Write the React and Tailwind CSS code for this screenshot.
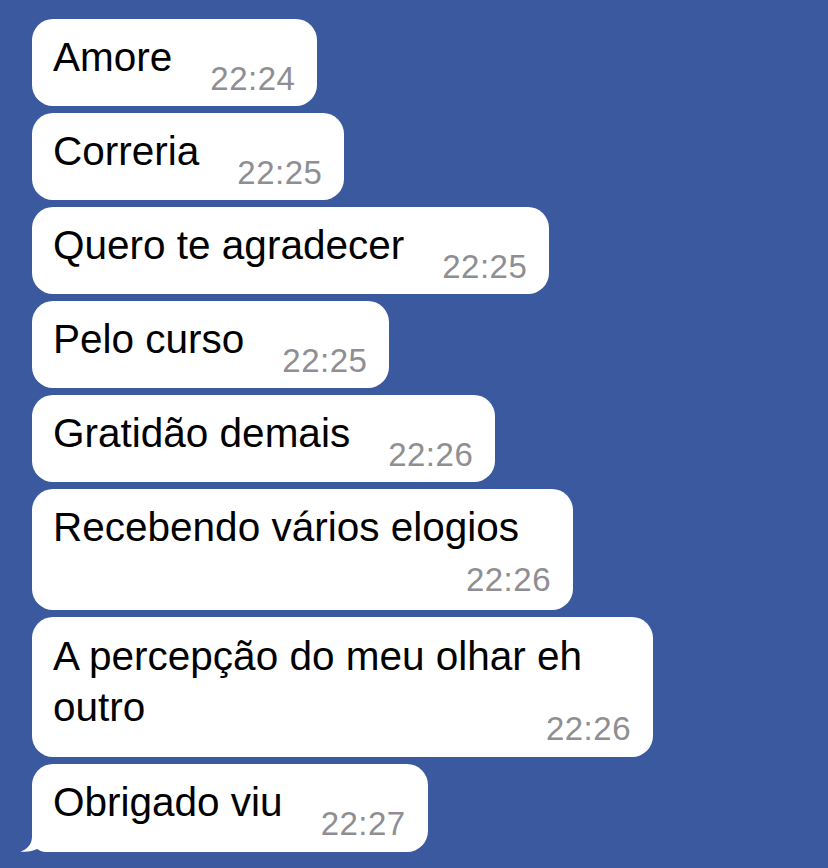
import React from 'react'

const messages = [
  { lines: ['Amore'], time: '22:24' },
  { lines: ['Correria'], time: '22:25' },
  { lines: ['Quero te agradecer'], time: '22:25' },
  { lines: ['Pelo curso'], time: '22:25' },
  { lines: ['Gratidão demais'], time: '22:26' },
  { lines: ['Recebendo vários elogios'], time: '22:26', below: true, width: 'w-[541px]' },
  { lines: ['A percepção do meu olhar eh', 'outro'], time: '22:26', width: 'w-[621px]', pb: 'pb-[24px]' },
  { lines: ['Obrigado viu'], time: '22:27', tail: true, pb: 'pb-[24px]' },
]

const Tail = () => (
  <svg
    className="absolute left-[-12px] bottom-0"
    width="30"
    height="30"
    viewBox="0 0 30 30"
  >
    <path
      d="M12 0 L12 14 C12 22 8 27 0.5 29.5 C7 30.5 14 29 19 26 C22 28 25 29.6 30 30 L30 0 Z"
      fill="#ffffff"
    />
  </svg>
)

const Bubble = ({ msg }) => {
  const rest = msg.lines.slice(0, -1)
  const last = msg.lines[msg.lines.length - 1]

  return (
    <div
      className={`relative bg-white rounded-[21px] pl-[21px] pr-[22px] pt-[13px] ${msg.pb || 'pb-[23px]'} ${msg.tail ? 'rounded-bl-[14px]' : ''} ${msg.width || ''}`}
    >
      {rest.map((l, i) => (
        <div key={i} className="leading-[52px]">{l}</div>
      ))}

      {msg.below ? (
        <>
          <div className="leading-[51px]">{last}</div>
          <div className="h-[34px] leading-[34px] text-right text-[33px] tracking-[0.5px] text-[#8e8e93] translate-y-[10px]">
            {msg.time}
          </div>
        </>
      ) : (
        <div className="flex items-baseline justify-between">
          <span className="leading-[51px]">{last}</span>
          <span className="ml-[38px] text-[33px] tracking-[0.5px] leading-none text-[#8e8e93] translate-y-[19px]">
            {msg.time}
          </span>
        </div>
      )}

      {msg.tail && <Tail />}
    </div>
  )
}

export default function App() {
  return (
    <div
      className="min-h-screen bg-[#3a599f] pt-[19px] pl-[32px] flex flex-col items-start gap-[7px] text-[40.5px] text-black"
      style={{ fontFamily: "'Liberation Sans', Arial, sans-serif" }}
    >
      {messages.map((m, i) => (
        <Bubble key={i} msg={m} />
      ))}
    </div>
  )
}
